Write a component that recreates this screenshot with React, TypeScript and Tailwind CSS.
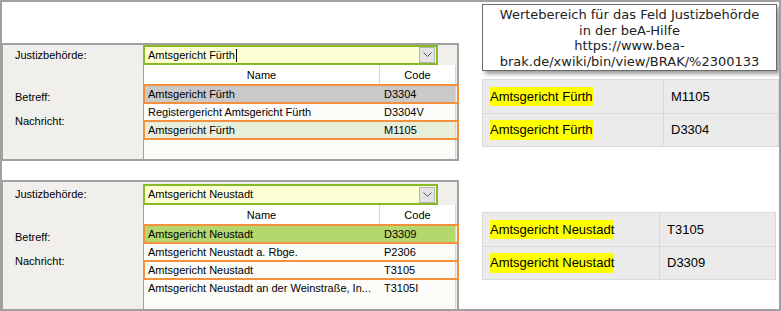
import React from "react";

type Row = { name: string; code: string; bg?: string; mark?: boolean };

const furth: Row[] = [
  { name: "Amtsgericht Fürth", code: "D3304", bg: "bg-[#c9c9c9]", mark: true },
  { name: "Registergericht Amtsgericht Fürth", code: "D3304V" },
  { name: "Amtsgericht Fürth", code: "M1105", bg: "bg-[#e7efdb]", mark: true },
];

const neustadt: Row[] = [
  { name: "Amtsgericht Neustadt", code: "D3309", bg: "bg-[#b5d86c]", mark: true },
  { name: "Amtsgericht Neustadt a. Rbge.", code: "P2306" },
  { name: "Amtsgericht Neustadt", code: "T3105", mark: true },
  { name: "Amtsgericht Neustadt an der Weinstraße, In...", code: "T3105I" },
];

function Chevron() {
  return (
    <svg width="9" height="6" viewBox="0 0 9 6" fill="none">
      <path d="M0.5 0.5 L4.5 4.5 L8.5 0.5" stroke="#555" strokeWidth="1" />
    </svg>
  );
}

function Panel({
  value,
  cursor,
  rows,
  className,
  inputH,
}: {
  value: string;
  cursor?: boolean;
  rows: Row[];
  className: string;
  inputH: string;
}) {
  return (
    <div className={`flex border-2 border-l border-[#a0a0a0] bg-[#f0efeb] text-[11px] text-black ${className}`}>
      {/* labels */}
      <div className="w-[140px] shrink-0 pl-3 flex flex-col">
        <div className={`${inputH} flex items-center`}>Justizbehörde:</div>
        <div className="mt-[24px] h-[16px] flex items-center">Betreff:</div>
        <div className="mt-[8px] h-[16px] flex items-center">Nachricht:</div>
      </div>

      {/* combo + dropdown */}
      <div className="flex-1 flex flex-col">
        <div className={`w-[295px] ${inputH} border-2 border-[#86bb26] bg-[#ffffd6] flex items-center pl-[3px] pr-[1px]`}>
          <span className="flex-1 flex items-center">
            {value}
            {cursor && <span className="inline-block w-px h-[13px] bg-black ml-[1px]" />}
          </span>
          <span className="w-[16px] h-[16px] bg-[#e4e4e4] border border-[#b4b4b4] flex items-center justify-center">
            <Chevron />
          </span>
        </div>
        <div className="flex-1 border-l border-r border-[#a0a0a0] border-r-[#d6d6d6] bg-[#fbfbf8] mr-[1px]">
          <div className="h-[20px] flex bg-white">
            <div className="w-[236px] flex items-center justify-center border-r border-[#d6d6d6]">Name</div>
            <div className="flex-1 flex items-center justify-center">Code</div>
          </div>
          {rows.map((r, i) => (
            <div key={i} className={`relative h-[18px] flex items-center ${r.bg ?? ""}`}>
              <div className="w-[236px] pl-[4px] truncate">{r.name}</div>
              <div className="pl-[4px]">{r.code}</div>
              {r.mark && (
                <span className="absolute left-[-1px] right-[-4px] top-[-1px] bottom-[-1px] border-2 border-[#f5913c]" />
              )}
            </div>
          ))}
        </div>
      </div>
    </div>
  );
}

function ValueTable({ rows, col, className }: { rows: { name: string; code: string }[]; col: string; className: string }) {
  return (
    <div className={`border border-[#dadada] bg-[#ebebeb] text-[13px] text-black ${className}`}>
      {rows.map((r, i) => (
        <div key={i} className={`flex h-[33px] ${i > 0 ? "border-t border-[#dadada]" : ""}`}>
          <div className={`${col} pl-[7px] flex items-center border-r border-[#dadada]`}>
            <span className="bg-[#ffff00]">{r.name}</span>
          </div>
          <div className="flex-1 pl-[7px] flex items-center">{r.code}</div>
        </div>
      ))}
    </div>
  );
}

export default function App() {
  return (
    <div
      className="w-[781px] h-[311px] border-2 border-[#a0a0a0] bg-white flex overflow-hidden"
      style={{ fontFamily: '"Liberation Sans", Arial, sans-serif' }}
    >
      {/* left: screenshots of the form */}
      <div className="w-[457px] shrink-0 flex flex-col pt-[41px]">
        <Panel value="Amtsgericht Fürth" cursor rows={furth} inputH="h-[20px]" className="h-[118px]" />
        <Panel
          value="Amtsgericht Neustadt"
          rows={neustadt}
          inputH="h-[21px]"
          className="mt-[19px] pt-[2px] flex-1 border-b-0"
        />
      </div>

      {/* right: note + tables */}
      <div className="flex-1 pl-[23px] flex flex-col">
        <div
          className="mt-[2px] w-[295px] h-[67px] border border-[#6b6b6b] bg-white shadow-[3px_3px_4px_rgba(0,0,0,0.4)] text-center text-[13px] leading-[15.6px] text-[#222] pt-[2px]"
          style={{ fontFamily: '"DejaVu Sans", Verdana, sans-serif' }}
        >
          <div>Wertebereich für das Feld Justizbehörde</div>
          <div>in der beA-Hilfe</div>
          <div>https://www.bea-</div>
          <div>brak.de/xwiki/bin/view/BRAK/%2300133</div>
        </div>

        <ValueTable
          className="mt-[8px] w-[297px]"
          col="w-[181px]"
          rows={[
            { name: "Amtsgericht Fürth", code: "M1105" },
            { name: "Amtsgericht Fürth", code: "D3304" },
          ]}
        />

        <ValueTable
          className="mt-[65px] w-[294px]"
          col="w-[177px]"
          rows={[
            { name: "Amtsgericht Neustadt", code: "T3105" },
            { name: "Amtsgericht Neustadt", code: "D3309" },
          ]}
        />
      </div>
    </div>
  );
}
